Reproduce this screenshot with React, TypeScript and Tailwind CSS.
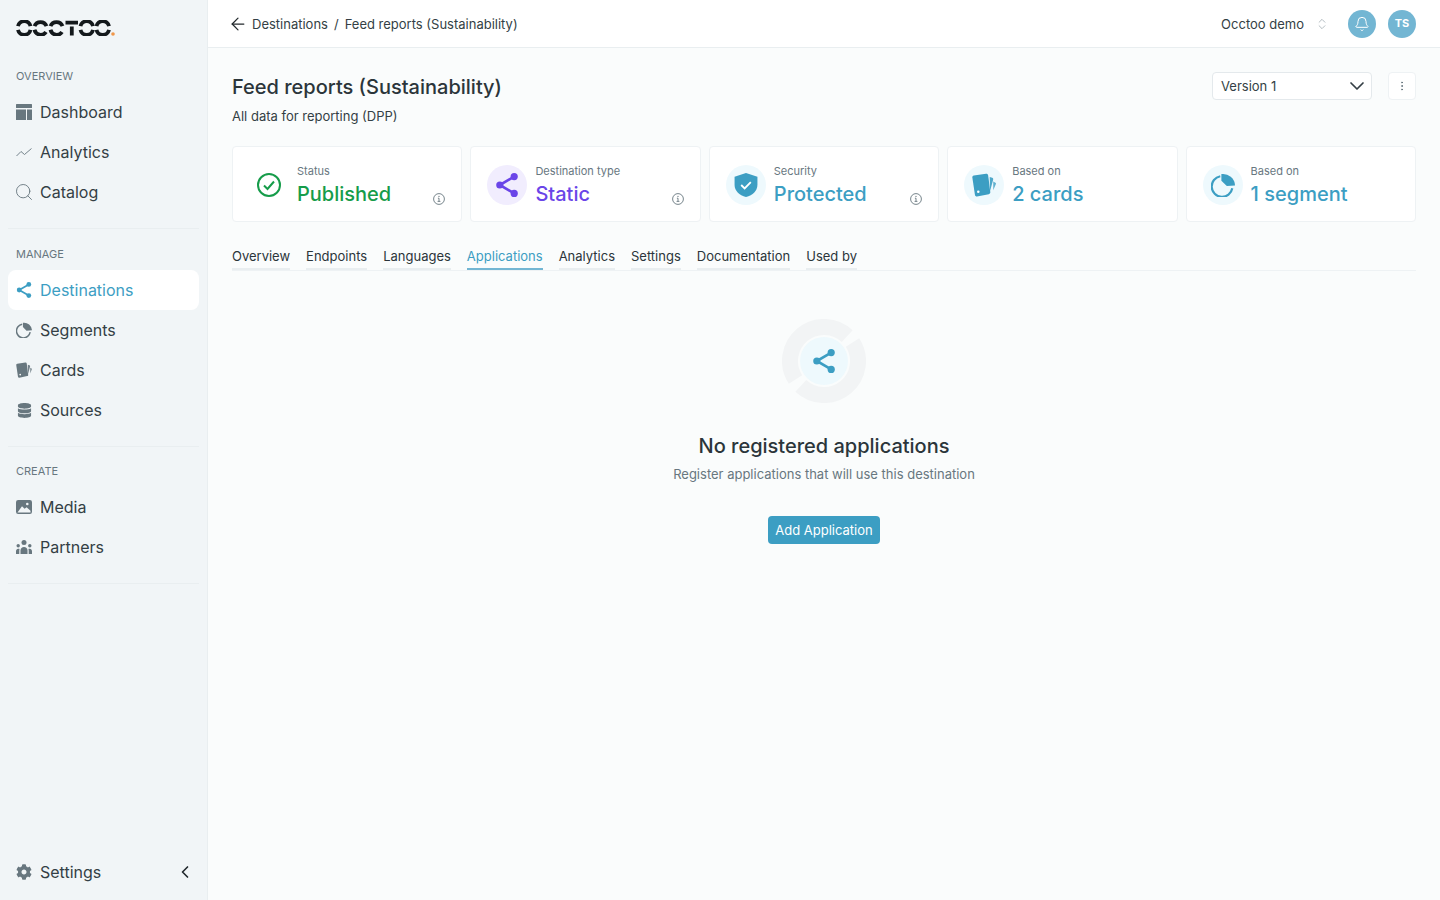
import type { ReactNode } from "react";
import { ArrowLeft, Bell, ChevronDown, ChevronLeft, ChevronsUpDown, EllipsisVertical, Search } from "lucide-react";
import { FaCog, FaDatabase } from "react-icons/fa";

type IconProps = { className?: string };

const ShareIcon = ({ className }: IconProps) => (
  <svg viewBox="2 2 20 20" className={className} fill="currentColor" stroke="currentColor">
    <path d="M18 5 6 12l12 7" fill="none" strokeWidth="2.2" />
    <circle cx="18" cy="5" r="3" stroke="none" />
    <circle cx="6" cy="12" r="3" stroke="none" />
    <circle cx="18" cy="19" r="3" stroke="none" />
  </svg>
);

const DashboardIcon = ({ className }: IconProps) => (
  <svg viewBox="0 0 16 16" className={className} fill="currentColor">
    <rect x="0" y="0" width="16" height="4" rx="0.5" />
    <rect x="0" y="5.5" width="10" height="10.5" />
    <rect x="11" y="5.5" width="5" height="10.5" />
  </svg>
);

const AnalyticsIcon = ({ className }: IconProps) => (
  <svg viewBox="0 0 16 16" className={className} fill="none" stroke="currentColor" strokeWidth="0.9">
    <path d="M0.5 12 5 7.5l3.5 3L15.5 4.5" />
  </svg>
);

const PieIcon = ({ className }: IconProps) => (
  <svg viewBox="1 1 22 22" className={className} fill="none" stroke="currentColor">
    <path d="M9.5 4A9.5 9.5 0 1 0 20.5 15" strokeWidth="2" />
    <path d="M10.5 2A11 11 0 0 1 23 12.5L15.5 13 10.5 8Z" fill="currentColor" stroke="none" />
  </svg>
);

const CardsIcon = ({ className }: IconProps) => (
  <svg viewBox="2 1 21 21" className={className} fill="currentColor">
    <path d="M17.5 4.5l2.2.7c.7.2 1 .9.8 1.6l-2.6 9.7-.1-.1z" opacity="0.9" />
    <path d="M20.6 8.5l1.9 1c.4.2.6.7.4 1.1L20.6 16z" opacity="0.8" />
    <path d="M3.6 3.2 14.3 1.6c.9-.1 1.6.4 1.8 1.3l1.9 14.8c.1.9-.4 1.6-1.3 1.8L6.4 21.6c-.9.1-1.6-.4-1.8-1.3L2.3 5c-.1-.9.4-1.6 1.3-1.8z" />
    <circle cx="7.5" cy="17.5" r="1.1" fill="#fff" />
  </svg>
);

const MediaIcon = ({ className }: IconProps) => (
  <svg viewBox="0 0 16 16" className={className}>
    <rect x="0" y="1" width="16" height="14" rx="2.2" fill="currentColor" />
    <path d="M1.5 13.5 6 7.2l2.6 2.6 2-1.6 3.9 3.6v1.7z" fill="#f1f5f7" />
    <circle cx="11.3" cy="5" r="1.3" fill="#f1f5f7" />
  </svg>
);

const PartnersIcon = ({ className }: IconProps) => (
  <svg viewBox="0 0 16 16" className={className} fill="currentColor">
    <circle cx="8" cy="3.5" r="2.5" />
    <circle cx="2.2" cy="6.8" r="1.7" />
    <circle cx="13.8" cy="6.8" r="1.7" />
    <path d="M4.5 15v-3.5C4.5 9.5 6 8 8 8s3.5 1.5 3.5 3.5V15z" />
    <path d="M0 15v-2.5c0-1.8 1-2.8 2.2-2.8.6 0 1 .2 1.4.4-.2.5-.3 1-.3 1.6V15z" />
    <path d="M16 15v-2.5c0-1.8-1-2.8-2.2-2.8-.6 0-1 .2-1.4.4.2.5.3 1 .3 1.6V15z" />
  </svg>
);

const ShieldIcon = ({ className }: IconProps) => (
  <svg viewBox="2 1.5 20 21" className={className}>
    <path d="M12 1.5 22 4.8v7c0 5.2-4 9.2-10 10.7C6 21 2 17 2 11.8v-7z" fill="currentColor" />
    <path d="m7.8 12 3 3 5.4-5.6" fill="none" stroke="#fff" strokeWidth="1.6" />
  </svg>
);

const CheckCircleIcon = ({ className }: IconProps) => (
  <svg viewBox="0 0 24 24" className={className} fill="none" stroke="currentColor" strokeWidth="2">
    <circle cx="12" cy="12" r="11" />
    <path d="m7 12.5 3.5 3.5L17 8.5" />
  </svg>
);

const InfoIcon = ({ className }: IconProps) => (
  <svg viewBox="0 0 12 12" className={className} fill="none" stroke="currentColor" strokeWidth="0.9">
    <circle cx="6" cy="6" r="5.4" />
    <path d="M4.9 5.2H6v3M4.6 8.4h2.8" />
    <circle cx="6" cy="3.4" r="0.6" fill="currentColor" stroke="none" />
  </svg>
);

const Logo = () => (
  <svg viewBox="0 0 100 16" className="h-4 w-[100px]" fill="none" stroke="#14191c" strokeWidth="3.8">
    <path d="M2 6.2A6.4 6.4 0 0 1 14.5 6.2M2 9.8A6.4 6.4 0 0 0 14.5 9.8" />
    <path d="M18.5 6.2A6.4 6.4 0 0 1 30.5 6.2M18.5 9.8A6.4 6.4 0 0 0 30 12" />
    <path d="M34.5 6.2A6.4 6.4 0 0 1 46.5 6.2M34.5 9.8A6.4 6.4 0 0 0 46 12" />
    <path d="M49.5 2.6H62M55.8 6.5V15.5" />
    <path d="M64.5 6.2A6.4 6.4 0 0 1 77 6.2M64.5 9.8A6.4 6.4 0 0 0 77 9.8" />
    <path d="M80.5 6.2A6.4 6.4 0 0 1 93 6.2M80.5 9.8A6.4 6.4 0 0 0 93 9.8" />
    <circle cx="97" cy="14" r="1.8" fill="#f0974a" stroke="none" />
  </svg>
);

const NavItem = ({ icon, label, active }: { icon: ReactNode; label: string; active?: boolean }) => (
  <div className={`flex h-10 items-center gap-2 rounded-lg px-2 text-base ${active ? "bg-white text-[#3c9ec3]" : "text-[#343f45]"}`}>
    <span className={`flex h-4 w-4 items-center justify-center ${active ? "text-[#3c9ec3]" : "text-[#68777f]"}`}>{icon}</span>
    {label}
  </div>
);

const NavSection = ({ title, children, last }: { title: string; children: ReactNode; last?: boolean }) => (
  <div className={`mx-2 border-b border-[#e9eef0] pb-4 ${last ? "pt-4" : "pt-[17px]"}`}>
    <div className="mb-2 h-4 px-2 text-[11px] leading-4 text-[#68777f]">{title}</div>
    {children}
  </div>
);

const Sidebar = () => (
  <aside className="flex h-full w-[208px] shrink-0 flex-col border-r border-[#e9eef0] bg-[#f1f5f7]">
    <div className="flex h-[51px] items-center px-4 pt-[5px]">
      <Logo />
    </div>
    <NavSection title="OVERVIEW">
      <NavItem icon={<DashboardIcon className="h-4 w-4" />} label="Dashboard" />
      <NavItem icon={<AnalyticsIcon className="h-4 w-4" />} label="Analytics" />
      <NavItem icon={<Search className="h-5 w-5 shrink-0" strokeWidth={1.1} />} label="Catalog" />
    </NavSection>
    <NavSection title="MANAGE">
      <NavItem active icon={<ShareIcon className="h-4 w-4" />} label="Destinations" />
      <NavItem icon={<PieIcon className="h-4 w-4" />} label="Segments" />
      <NavItem icon={<CardsIcon className="h-4 w-4" />} label="Cards" />
      <NavItem icon={<FaDatabase className="h-[15px] w-[15px]" />} label="Sources" />
    </NavSection>
    <NavSection title="CREATE" last>
      <NavItem icon={<MediaIcon className="h-4 w-4" />} label="Media" />
      <NavItem icon={<PartnersIcon className="h-4 w-4" />} label="Partners" />
    </NavSection>
    <div className="mx-2 mb-2 mt-auto flex h-10 items-center justify-between pl-2 pr-1 text-base text-[#343f45]">
      <div className="flex items-center gap-2">
        <FaCog className="h-4 w-4 text-[#68777f]" />
        Settings
      </div>
      <ChevronLeft className="h-5 w-5 text-[#22292d]" strokeWidth={2} />
    </div>
  </aside>
);

const cards = [
  { title: "Status", value: "Published", color: "text-[#169c4a]", info: true, bg: "", icon: <CheckCircleIcon className="h-6 w-6" /> },
  { title: "Destination type", value: "Static", color: "text-[#6a45e8]", info: true, bg: "bg-[#f1edfe]", icon: <ShareIcon className="h-6 w-6" /> },
  { title: "Security", value: "Protected", color: "text-[#3c9ec3]", info: true, bg: "bg-[#eef9fd]", icon: <ShieldIcon className="h-6 w-6" /> },
  { title: "Based on", value: "2 cards", color: "text-[#3c9ec3]", info: false, bg: "bg-[#eef9fd]", icon: <CardsIcon className="h-6 w-6" /> },
  { title: "Based on", value: "1 segment", color: "text-[#3c9ec3]", info: false, bg: "bg-[#eef9fd]", icon: <PieIcon className="h-6 w-6" /> },
];

const tabs = ["Overview", "Endpoints", "Languages", "Applications", "Analytics", "Settings", "Documentation", "Used by"];

export default function App() {
  return (
    <div className="flex h-screen w-full overflow-hidden bg-[#fafcfc] font-['Inter',sans-serif]">
      <Sidebar />
      <div className="flex min-w-0 flex-1 flex-col">
        <header className="flex h-12 shrink-0 items-center justify-between border-b border-[#e9eef0] bg-white pl-6 pr-6">
          <div className="flex items-center text-[13px] text-[#343f45]">
            <ArrowLeft className="-ml-1 mr-1 h-5 w-5 text-[#22292d]" strokeWidth={1.5} />
            <span className="pt-0.5">Destinations</span>
            <span className="mx-[6px] pt-0.5">/</span>
            <span className="pt-0.5">Feed reports (Sustainability)</span>
          </div>
          <div className="flex items-center">
            <span className="pt-0.5 text-[13px] text-[#343f45]">Occtoo demo</span>
            <ChevronsUpDown className="ml-[11px] h-3.5 w-3.5 text-[#a9b4b9]" strokeWidth={1.5} />
            <div className="ml-[19px] flex h-7 w-7 items-center justify-center rounded-full bg-[#73b6d3] text-white">
              <Bell className="h-4 w-4" strokeWidth={1.5} />
            </div>
            <div className="ml-3 flex h-7 w-7 items-center justify-center rounded-full bg-[#73b6d3] text-[11px] font-bold text-white">TS</div>
          </div>
        </header>

        <main className="flex flex-1 flex-col px-6 pt-6">
          <div className="flex items-start justify-between">
            <div>
              <h1 className="text-[20px] font-medium leading-[30px] text-[#2b353a]">Feed reports (Sustainability)</h1>
              <p className="mt-1 text-[13px] leading-5 text-[#343f45]">All data for reporting (DPP)</p>
            </div>
            <div className="flex items-center gap-4">
              <div className="flex h-7 w-40 items-center justify-between rounded border border-[#e4e9ec] bg-white pl-2 pr-0.5 text-[13px] text-[#343f45]">
                <span className="pt-px">Version 1</span>
                <ChevronDown className="h-6 w-6" strokeWidth={1.7} />
              </div>
              <div className="flex h-7 w-7 items-center justify-center rounded border border-[#eef2f4] bg-white text-[#68777f]">
                <EllipsisVertical className="h-3 w-3" />
              </div>
            </div>
          </div>

          <div className="mt-5 grid grid-cols-5 gap-2">
            {cards.map((card) => (
              <div key={card.value} className="relative flex h-[76px] items-center gap-2 rounded border border-[#eef2f4] bg-white px-4 pt-[2px]">
                <div className={`flex h-10 w-10 shrink-0 items-center justify-center rounded-full ${card.bg} ${card.color}`}>{card.icon}</div>
                <div className="mt-[2px]">
                  <div className="text-[11px] leading-4 text-[#68777f]">{card.title}</div>
                  <div className={`text-[20px] font-medium leading-[30px] ${card.color}`}>{card.value}</div>
                </div>
                {card.info && <InfoIcon className="absolute bottom-4 right-4 h-3 w-3 text-[#68777f]" />}
              </div>
            ))}
          </div>

          <nav className="mt-[23px] flex gap-4 border-b border-[#eef2f4]">
            {tabs.map((tab) => (
              <div
                key={tab}
                className={`h-[25px] border-b-2 pt-px text-[13px] leading-5 ${
                  tab === "Applications" ? "border-[#73b6d3] text-[#3c9ec3]" : "border-[#e9eef0] text-[#2b353a]"
                }`}
              >
                {tab}
              </div>
            ))}
          </nav>

          <section className="mt-12 flex flex-col items-center">
            <div className="relative flex h-[84px] w-[84px] items-center justify-center">
              <svg viewBox="0 0 84 84" className="absolute inset-0 h-full w-full" fill="none">
                <path d="M13.5 60.5A34 34 0 0 1 65.2 17.1" stroke="#f2f4f5" strokeWidth="16" />
                <path d="M70.5 23.5A34 34 0 0 1 18.8 66.9" stroke="#f2f4f5" strokeWidth="16" />
              </svg>
              <div className="relative flex h-12 w-12 items-center justify-center rounded-full bg-[#eef9fd] text-[#3c9ec3]">
                <ShareIcon className="h-6 w-6" />
              </div>
            </div>
            <h2 className="mt-[29px] text-[20px] font-medium leading-7 text-[#2b353a]">No registered applications</h2>
            <p className="mt-1 text-[13px] leading-5 text-[#68777f]">Register applications that will use this destination</p>
            <button className="mt-8 h-7 w-[112px] rounded bg-[#3c9ec3] pt-px text-[13px] text-white">Add Application</button>
          </section>
        </main>
      </div>
    </div>
  );
}
